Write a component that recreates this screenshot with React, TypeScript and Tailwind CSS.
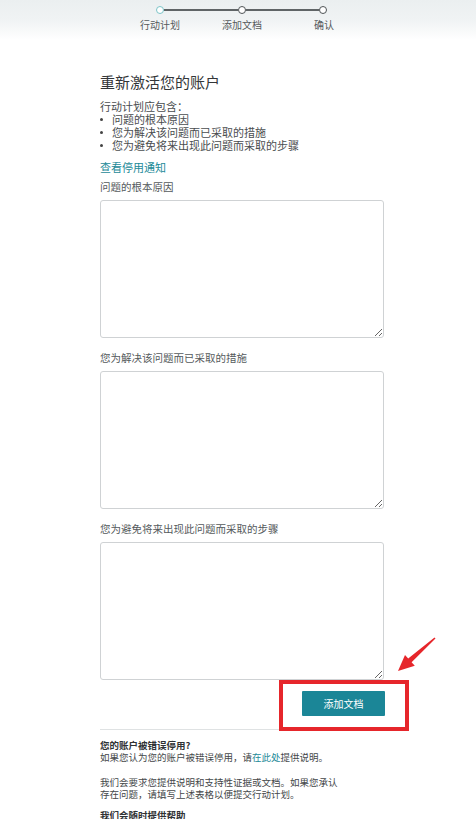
import React from "react";

const STEPS = ["行动计划", "添加文档", "确认"];

const BULLETS = [
  "问题的根本原因",
  "您为解决该问题而已采取的措施",
  "您为避免将来出现此问题而采取的步骤",
];

const FIELDS = [
  "问题的根本原因",
  "您为解决该问题而已采取的措施",
  "您为避免将来出现此问题而采取的步骤",
];

function Stepper() {
  return (
    <div className="h-[40px] bg-linear-to-b from-[#ebeff0] via-[#f0f3f4] to-white pt-[6px]">
      {/* Circles + connecting lines */}
      <div className="ml-[156px] flex h-[8px] w-[171px] items-center">
        <span className="h-[8px] w-[8px] shrink-0 rounded-full border-[1.5px] border-[#7cc4c8] bg-white" />
        <span className="h-[1.5px] flex-1 bg-[#5f6466]" />
        <span className="h-[8px] w-[8px] shrink-0 rounded-full border-[1.5px] border-[#4f5456] bg-white" />
        <span className="h-[1.5px] flex-1 bg-[#5f6466]" />
        <span className="h-[8px] w-[8px] shrink-0 rounded-full border-[1.5px] border-[#4f5456] bg-white" />
      </div>
      <div className="ml-[119px] mt-[5px] flex">
        {STEPS.map((s) => (
          <div
            key={s}
            className="w-[82px] text-center text-[10px] leading-[12px] text-[#555a5c]"
          >
            {s}
          </div>
        ))}
      </div>
    </div>
  );
}

export default function App() {
  return (
    <div
      className="relative min-h-[819px] w-[476px] overflow-hidden bg-white text-[#4a4d4f]"
      style={{ fontFamily: '"Noto Sans CJK SC", "Noto Sans", "Liberation Sans", sans-serif' }}
    >
      <Stepper />

      <div className="ml-[100px] mt-[32px] w-[285px]">
        <h1 className="text-[15px] font-normal leading-[20px] text-[#333638]">
          重新激活您的账户
        </h1>

        <p className="mt-[8px] text-[11px] leading-[13px]">行动计划应包含：</p>
        <ul>
          {BULLETS.map((b) => (
            <li key={b} className="flex items-center text-[11px] leading-[13px]">
              <span className="h-[3px] w-[3px] rounded-full bg-[#444]" />
              <span className="ml-[9px]">{b}</span>
            </li>
          ))}
        </ul>

        <a className="mt-[8px] block text-[11px] leading-[14px] text-[#1c8a98]">
          查看停用通知
        </a>

        <div className="mt-[5px]">
          {FIELDS.map((f, i) => (
            <div key={f} className={i > 0 ? "mt-[12px]" : ""}>
              <label className="block text-[10.5px] leading-[16px] text-[#555a5c]">
                {f}
              </label>
              <textarea className="mt-[5px] block h-[138px] w-[284px] rounded-[3px] border border-[#cfd2d4] bg-white" />
            </div>
          ))}
        </div>

        <div className="mt-[11px] flex w-[285px] justify-end">
          <button className="h-[25px] w-[83px] rounded-[1px] bg-[#1b8697] text-[10px] text-white">
            添加文档
          </button>
        </div>

        <div className="mt-[13px] w-[284px] border-t border-[#dfe2e3]" />

        <div className="mt-[10px] w-[240px] text-[9.5px] leading-[11.5px] text-[#444749]">
          <p className="font-bold text-[#2f3234]">您的账户被错误停用?</p>
          <p>
            如果您认为您的账户被错误停用，请<a className="text-[#1c8a98]">在此处</a>提供说明。
          </p>
          <p className="mt-[14px]">
            我们会要求您提供说明和支持性证据或文档。如果您承认存在问题，请填写上述表格以便提交行动计划。
          </p>
          <p className="mt-[10px] font-bold text-[#2f3234]">我们会随时提供帮助</p>
        </div>
      </div>

      {/* Annotation: red highlight box */}
      <div className="absolute left-[279px] top-[680px] h-[51px] w-[130px] border-4 border-[#e6262b]" />

      {/* Annotation: red arrow */}
      <svg
        className="absolute left-[393px] top-[632px]"
        width="50"
        height="45"
        viewBox="0 0 50 45"
      >
        <path
          d="M5 39 L12 23 L15.2 26.5 L41.5 5.5 L42.5 6.5 L18.6 30.3 L21.8 33.8 Z"
          fill="#e6262b"
        />
      </svg>
    </div>
  );
}
